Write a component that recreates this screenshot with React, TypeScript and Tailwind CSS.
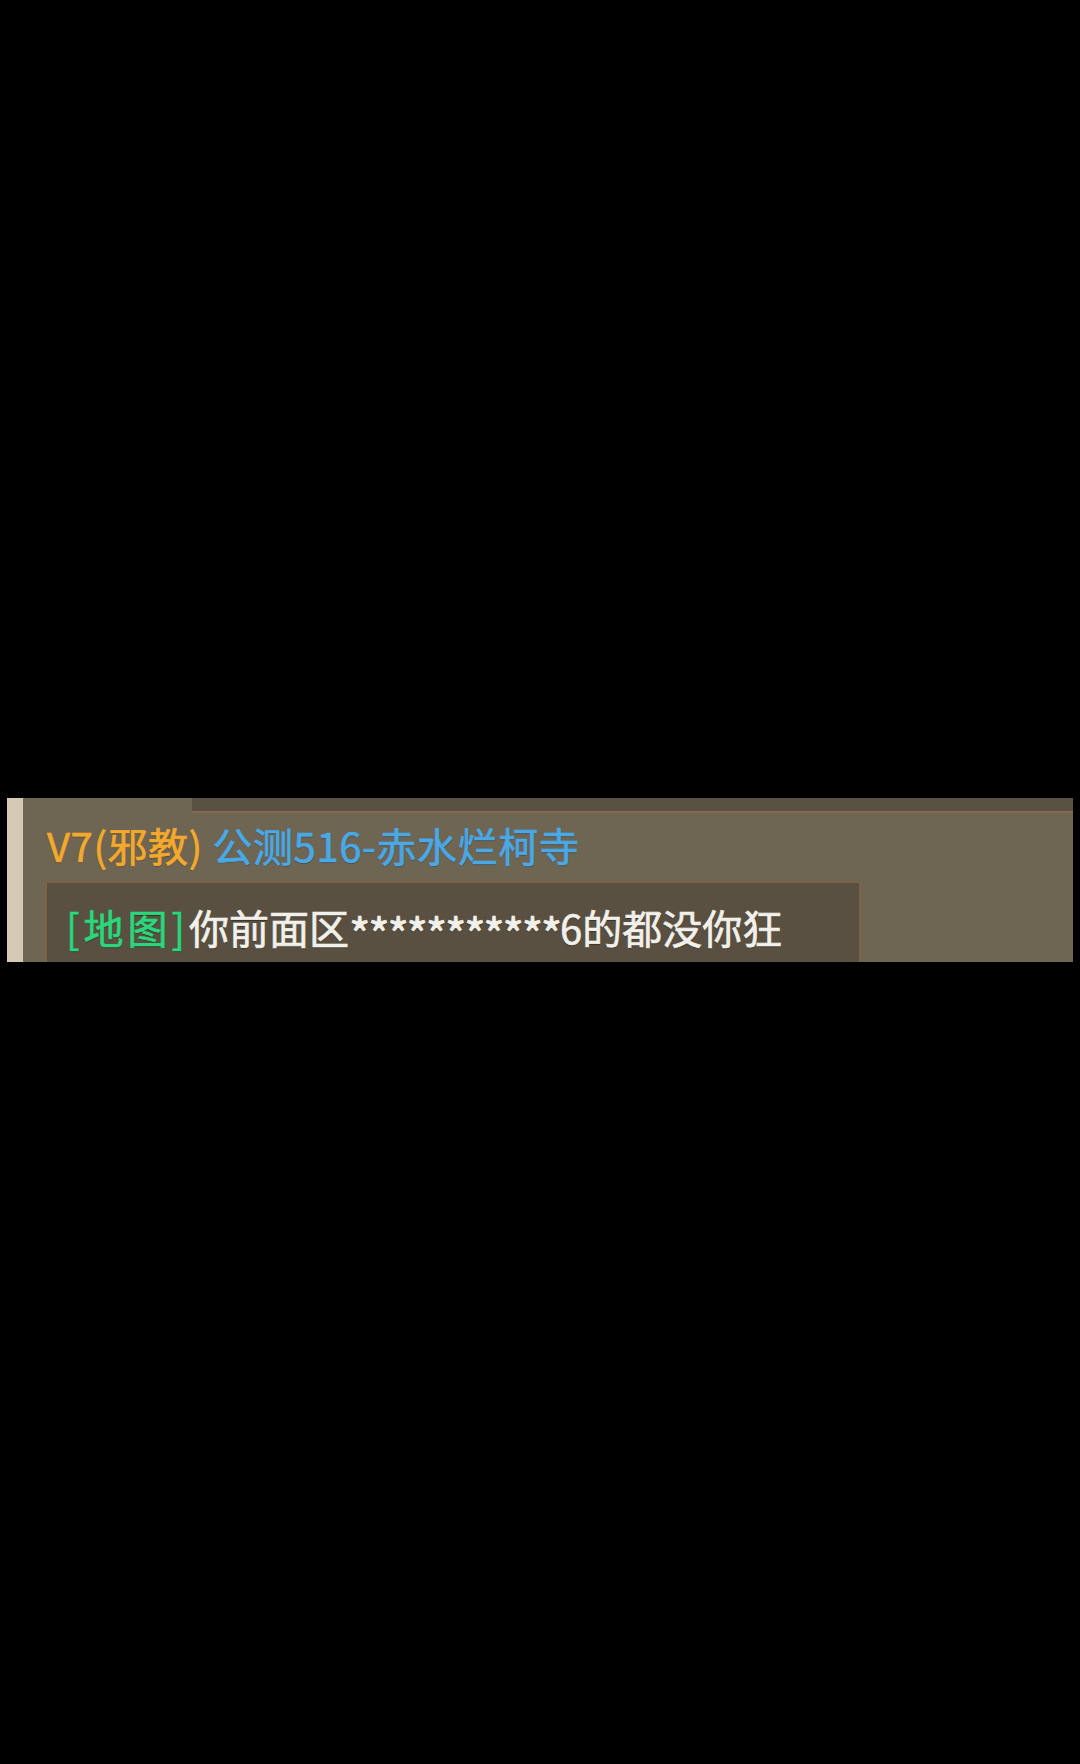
export default function App() {
  const font = { fontFamily: '"Noto Sans CJK SC", "Noto Sans", sans-serif' };
  return (
    <div className="min-h-[1764px] w-full bg-black pt-[798px]" style={font}>
      <div className="ml-[7px] flex h-[164px] w-[1066px] overflow-hidden">
        {/* light left rail */}
        <div className="w-[16px] shrink-0 bg-[#d6cab6]" />
        <div className="flex flex-1 flex-col bg-[#6f6553]">
          <div className="flex h-[15px] shrink-0">
            <div className="w-[169px] shrink-0" />
            <div className="flex-1 border-b-2 border-[#876a4d] bg-[#595142]" />
          </div>
          <div className="mt-[12px] pl-[24px] text-[40px] leading-[40px] tracking-[0.6px] [-webkit-text-stroke:0.7px_currentColor] [text-shadow:0_1px_1px_rgba(0,0,0,0.35)]">
            <span className="text-[#f3a92d]">V7(邪教)</span>
            <span className="text-[#49a9e6]"> 公测516-赤水烂柯寺</span>
          </div>
          <div className="ml-[22px] mt-[16px] h-[120px] w-[816px] shrink-0 border-2 border-b-0 border-[#7b6249] bg-[#595041] pl-[19px] pt-[24px]">
            <div className="whitespace-nowrap text-[40px] leading-[40px] [-webkit-text-stroke:0.7px_currentColor] [text-shadow:0_1px_1px_rgba(0,0,0,0.45)]">
              <span className="tracking-[4px] text-[#2bd67c]">[地图]</span>
              <span className="text-[#f2f0ea]">
                你前面区
                <span className="relative top-[9px] text-[46px] leading-[34px] tracking-[-2.3px]">***********</span>
                6的都没你狂
              </span>
            </div>
          </div>
        </div>
      </div>
    </div>
  );
}
